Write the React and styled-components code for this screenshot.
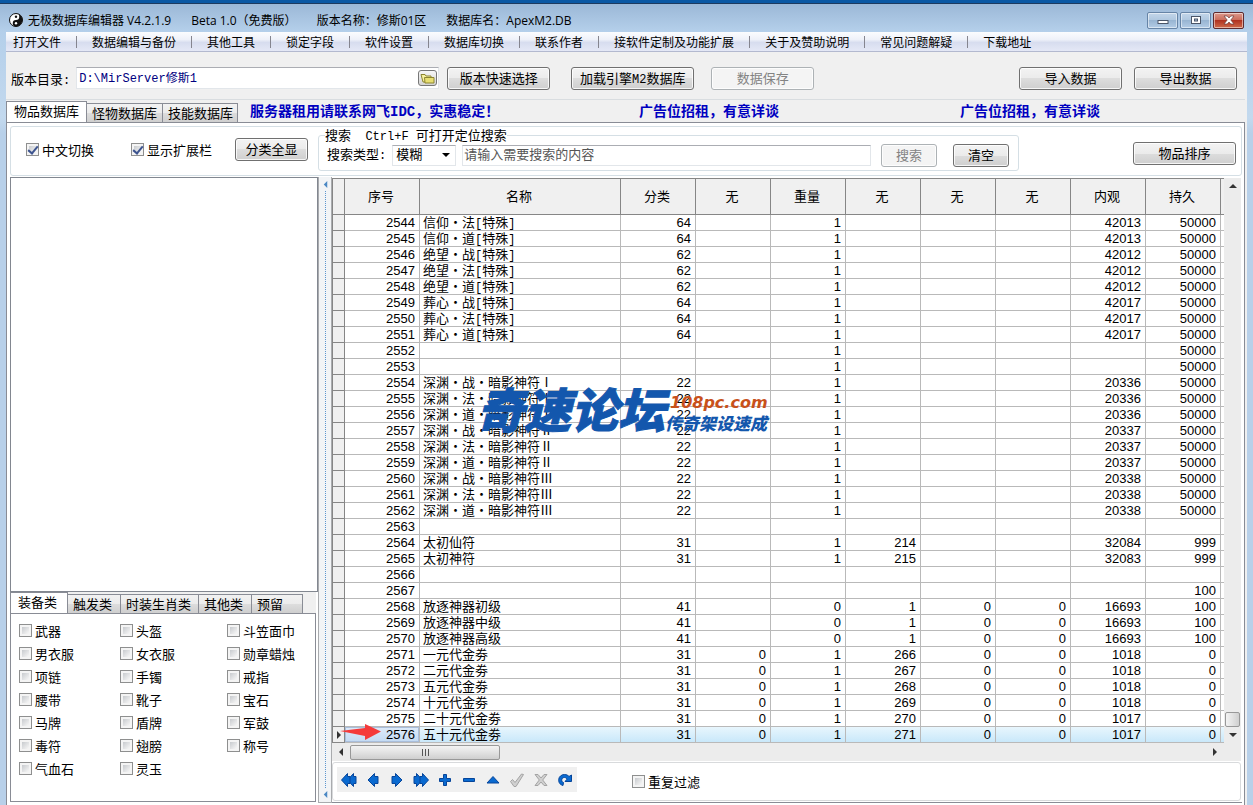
import React from 'react'
import styled, { createGlobalStyle, css } from 'styled-components'

const song = `"Liberation Mono", "Noto Sans CJK SC", monospace`
const yahei = `"Open Sans", "Noto Sans CJK SC", sans-serif`

const GlobalStyle = createGlobalStyle`
  * {
    box-sizing: border-box;
  }
  body {
    margin: 0;
    overflow: hidden;
    background: #fff;
    color: #000;
    font-family: "Noto Sans CJK SC", sans-serif;
    font-size: 13px;
    line-height: 15px;
  }
  button, input, select {
    margin: 0;
    font: inherit;
    color: inherit;
  }
`

const Window = styled.div`
  height: 100vh;
  display: flex;
  flex-direction: column;
  padding: 0 6px;
  border-top: 3px solid #0a58a4;
  background: linear-gradient(#9ab7d6, #b4cfea 28px, #c3d9ee 115px, #b8d0e9 130px);
`

const TitleBar = styled.header`
  height: 29px;
  flex: none;
  display: flex;
  align-items: center;
  gap: 20px;
  padding: 4px 9px 0;
  margin: 0 -6px;
  border-top: 1px solid #1d3a5f;
  font-family: ${yahei};
  font-size: 12px;
  white-space: nowrap;
`

const AppName = styled.span`
  display: flex;
  align-items: center;
  gap: 5px;
`

const WindowButtons = styled.div`
  display: flex;
  gap: 2px;
  margin-left: auto;
`

const WindowButton = styled.button`
  width: 31px;
  height: 17px;
  display: flex;
  align-items: center;
  justify-content: center;
  padding: 0;
  border: 1px solid ${(p) => (p.$close ? '#5f2a2e' : '#6684a6')};
  border-radius: 2px;
  box-shadow: inset 0 0 0 1px rgba(255, 255, 255, 0.5);
  background: ${(p) =>
    p.$close
      ? 'linear-gradient(#dd9a8d, #cb6d5c 45%, #b03220 50%, #cf6a4a)'
      : 'linear-gradient(#c3d6ea, #b0c8e0 45%, #98b5d2 50%, #b3cce6)'};
`

const MenuBar = styled.nav`
  height: 20px;
  flex: none;
  display: flex;
  align-items: center;
  padding-left: 7px;
  border-bottom: 1px solid #b3b9cf;
  background: linear-gradient(#fbfcfe, #eef1f9 40%, #d7ddef 55%, #e4e8f6);
  font-size: 12px;
  white-space: nowrap;
  overflow: hidden;
`

const MenuItem = styled.button`
  padding: 0;
  border: 0;
  background: none;
  line-height: 16px;
`

const MenuSeparator = styled.span`
  width: 1px;
  height: 12px;
  flex: none;
  margin: 0 15px;
  background: #85858f;
`

const Body = styled.main`
  flex: 1;
  min-height: 0;
  display: flex;
  flex-direction: column;
  padding-right: 2px;
  background: #f0f0f0;
`

const Toolbar = styled.div`
  height: 48px;
  flex: none;
  display: flex;
  align-items: center;
  padding: 5px 8px 0 5px;
  border-bottom: 1px solid #d9dde0;
  white-space: nowrap;
`

const Button = styled.button`
  width: ${(p) => p.$width || 103}px;
  height: 23px;
  flex: none;
  padding: 0 0 2px;
  border: 1px solid #707070;
  border-radius: 3px;
  box-shadow: inset 0 0 0 1px rgba(255, 255, 255, 0.8);
  background: linear-gradient(#f3f3f3, #ebebeb 50%, #dddddd 50%, #cfcfcf);
  white-space: nowrap;

  &:disabled {
    border-color: #adb2b5;
    background: #f4f4f4;
    color: #838383;
  }
`

const SortButton = styled(Button)`
  margin-top: 15px;
`

const ButtonSet = styled.div`
  display: flex;
  gap: ${(p) => p.$gap}px;
  margin-left: ${(p) => p.$left || 'auto'};
`

const PathField = styled.div`
  width: 363px;
  height: 22px;
  display: flex;
  align-items: center;
  margin: 0 8px 0 6px;
  padding-right: 1px;
  border: 1px solid #e2e6ea;
  border-top-color: #abadb3;
  background: #fff;
`

const PathInput = styled.input`
  flex: 1;
  min-width: 0;
  padding: 2px 2px 0;
  border: 0;
  outline: 0;
  background: none;
  color: #000080;
  font-family: ${song};
  font-size: 12px;
`

const FolderButton = styled.button`
  width: 19px;
  height: 16px;
  display: flex;
  align-items: center;
  justify-content: center;
  padding: 0;
  border: 1px solid #777;
  border-radius: 3px;
  background: linear-gradient(#f6f6f6, #d4d4d4);
`

const TabRow = styled.div`
  height: ${(p) => p.$height}px;
  flex: none;
  display: flex;
  align-items: flex-end;
  background: #f0f0f0;
  white-space: nowrap;
`

const Tab = styled.button`
  width: ${(p) => p.$width}px;
  flex: none;
  height: 20px;
  padding: 0 0 2px 5px;
  border: 1px solid #898c95;
  border-left-width: ${(p) => (p.$first ? 1 : 0)}px;
  background: linear-gradient(#f2f2f2, #ebebeb 50%, #dddddd 50%, #cfcfcf);
  text-align: left;

  ${(p) =>
    p.$active &&
    css`
      height: 22px;
      padding: 0 0 4px 7px;
      border-bottom-color: #fff;
      background: #fff;
    `}
`

const Ads = styled.div`
  flex: 1;
  display: grid;
  grid-template-columns: 389px 321px auto;
  align-self: center;
  padding: 2px 0 0 12px;
  color: #0000c0;
  font-family: ${song};
  font-size: 14px;
  font-weight: bold;
`

const Page = styled.section`
  flex: 1;
  min-height: 0;
  display: flex;
  flex-direction: column;
  gap: 1px;
  margin-top: -1px;
  padding: 3px 2px 2px 3px;
  border: 1px solid #898c95;
  border-bottom: 0;
  background: #fff;
`

const SearchPanel = styled.div`
  height: 50px;
  flex: none;
  display: flex;
  align-items: flex-start;
  padding: 0 5px 0 15px;
  border: 1px solid #d5dfe5;
  border-radius: 3px;
  white-space: nowrap;
`

const CheckLabel = styled.label`
  display: flex;
  align-items: center;
  gap: 3px;
  white-space: nowrap;
`

const CheckBox = styled.input.attrs({ type: 'checkbox' })`
  appearance: none;
  width: 13px;
  height: 13px;
  flex: none;
  display: flex;
  align-items: center;
  justify-content: center;
  border: 1px solid #8e8f8f;
  box-shadow: inset 0 0 0 2px #f4f4f4;
  background: linear-gradient(135deg, #b9bdc2, #f3f3f3 75%);

  &:checked::after {
    content: "";
    width: 4px;
    height: 8px;
    margin-bottom: 2px;
    border: solid #3d548f;
    border-width: 0 2px 2px 0;
    transform: rotate(40deg);
  }
`

const ViewOptions = styled.div`
  width: 292px;
  flex: none;
  display: grid;
  grid-template-columns: 105px 104px auto;
  align-items: center;
  padding-top: 11px;
`

const SearchGroup = styled.fieldset`
  flex: 0 1 701px;
  min-width: 0;
  height: 43px;
  display: flex;
  align-items: center;
  margin: 1px 0 0;
  padding: 0 9px 3px;
  border: 1px solid #d5dfe5;
  border-radius: 3px;
`

const Legend = styled.legend`
  margin-left: -3px;
  padding: 0 0 2px;
  line-height: 13px;
  white-space: pre;
`

const FieldLabel = styled.label`
  margin: 0 0 3px -1px;
`

const Ascii = styled.span`
  font-family: "Liberation Mono", monospace;
  font-size: 12px;
  line-height: 0;
`

const TypePicker = styled.div`
  width: 64px;
  height: 21px;
  flex: none;
  display: flex;
  align-items: center;
  margin: 0 6px;
  padding-right: 5px;
  border: 1px solid #e2e6ea;
  border-top-color: #abadb3;
`

const TypeSelect = styled.select`
  flex: 1;
  min-width: 0;
  appearance: none;
  padding: 0 3px 3px;
  border: 0;
  background: none;
`

const SearchInput = styled.input`
  flex: 1;
  min-width: 0;
  height: 21px;
  margin-right: 10px;
  padding: 0 1px 4px;
  border: 1px solid #e2e6ea;
  border-top-color: #abadb3;

  &::placeholder {
    color: #555;
    opacity: 1;
  }
`

const Split = styled.div`
  flex: 1;
  min-height: 0;
  display: flex;
`

const Side = styled.aside`
  width: 308px;
  flex: none;
  display: flex;
  flex-direction: column;
  padding-bottom: 1px;
`

const Tree = styled.div`
  flex: 1;
  min-height: 0;
  border: 1px solid #828790;
  background: #fff;
`

const FilterTabs = styled.div`
  height: 210px;
  flex: none;
  display: flex;
  flex-direction: column;
  padding-right: 2px;
`

const FilterPage = styled.div`
  flex: 1;
  display: grid;
  grid-template-columns: 101px 107px auto;
  grid-auto-rows: 23px;
  margin-top: -1px;
  padding: 5px 0 0 8px;
  border: 1px solid #898c95;
  background: #fff;
`

const Splitter = styled.div`
  width: 14px;
  flex: none;
  display: flex;
  flex-direction: column;
  align-items: center;
  justify-content: space-between;
  padding: 4px 0;
  border: 1px solid #a9abae;
  border-top: 0;
  background: #f2f4f6;

  &::after {
    content: "";
    order: 1;
    flex: 1;
    margin: 3px 0;
    border-left: 1px dotted #5c96cf;
  }
  svg:last-of-type {
    order: 2;
  }
`

const GridSide = styled.div`
  flex: 1;
  min-width: 0;
  display: flex;
  flex-direction: column;
  padding: 1px 1px 0 0;
  border-bottom: 1px solid #898c95;
`

const GridArea = styled.div`
  position: relative;
  flex: 1;
  min-height: 0;
  display: flex;
`

const GridView = styled.div`
  flex: 1;
  min-width: 0;
  overflow: hidden;
`

const Table = styled.table`
  width: 100%;
  table-layout: fixed;
  border-collapse: separate;
  border-spacing: 0;
`

const HeadCell = styled.th`
  height: 37px;
  padding: 0 2px 2px 0;
  border: solid #868686;
  border-width: 1px 1px 1px 0;
  background: #f0f0f0;
  font-weight: normal;
  text-align: center;

  &:first-child {
    border-left-width: 1px;
  }
  &:last-child {
    padding: 0;
    border-right-width: 0;
  }
`

const Cell = styled.td`
  height: 16px;
  padding: 0 4px 0 3px;
  border: solid #b9b9b9;
  border-width: 0 1px 1px 0;
  font-family: "Liberation Sans", sans-serif;
  font-size: 13px;
  line-height: 15px;
  text-align: right;
  white-space: nowrap;

  &:last-child {
    padding: 0;
    border-right: 0;
  }
`

const NameCell = styled(Cell)`
  padding-bottom: 2px;
  font-family: "Noto Sans CJK SC", sans-serif;
  line-height: 13px;
  text-align: left;
`

const Indicator = styled.td`
  height: 16px;
  padding: 0 0 0 2px;
  border: solid #868686;
  border-width: 0 1px 1px;
  background: #f0f0f0;
  line-height: 0;
  text-align: left;
`

const Row = styled.tr`
  ${(p) =>
    p.$selected &&
    css`
      ${Cell} {
        background: linear-gradient(#e8f6fd, #c9e8fa);
      }
      ${Cell}:nth-child(2) {
        box-shadow: inset 0 0 0 1px #a9bedb;
        background: linear-gradient(#dfebf9, #c3daf3);
      }
    `}
`

const Watermark = styled.div`
  position: absolute;
  left: 145px;
  top: 205px;
  display: flex;
  align-items: flex-end;
  color: #1357ad;
  font-style: italic;
  font-weight: 900;
  white-space: nowrap;
  pointer-events: none;
`

const WatermarkName = styled.span`
  font-size: 47px;
  line-height: 50px;
  -webkit-text-stroke: 1px #1357ad;
`

const WatermarkSide = styled.span`
  display: flex;
  flex-direction: column;
  font-size: 17px;
  line-height: 20px;
`

const WatermarkSite = styled.span`
  padding-left: 5px;
  color: #c8511b;
  font-family: "DejaVu Sans", sans-serif;
  font-size: 16px;
`

const Pointer = styled.svg`
  position: absolute;
  left: 8px;
  bottom: 3px;
`

const VScroll = styled.div`
  width: 17px;
  flex: none;
  display: flex;
  flex-direction: column;
  align-items: center;
  background: #ececec;
`

const HScroll = styled.div`
  height: 18px;
  flex: none;
  display: flex;
  align-items: center;
  padding-right: 17px;
  background: #ececec;
`

const ScrollButton = styled.button`
  width: 18px;
  height: 16px;
  flex: none;
  display: flex;
  align-items: center;
  justify-content: center;
  padding: 0;
  border: 0;
  background: none;
`

const Thumb = styled.div`
  width: ${(p) => p.$width}px;
  height: 15px;
  display: flex;
  align-items: center;
  justify-content: center;
  border: 1px solid #989898;
  border-radius: 2px;
  background: linear-gradient(${(p) => (p.$vertical ? '90deg, ' : '')}#f3f3f3, #e2e2e2 50%, #cfcfcf);
`

const Spacer = styled.div`
  flex: 1;
`

const Footer = styled.div`
  height: 39px;
  flex: none;
  display: flex;
  align-items: center;
  gap: 55px;
  margin: 1px 0;
  padding: 0 4px;
  border: 1px solid #d8dadc;
  border-radius: 3px;
`

const Navigator = styled.div`
  display: flex;
  margin-bottom: 4px;
  background: #f0f0f0;
`

const NavButton = styled.button`
  width: 24px;
  height: 25px;
  display: flex;
  align-items: center;
  justify-content: center;
  padding: 0;
  border: 0;
  background: none;
`

const menus = [
  '打开文件', '数据编辑与备份', '其他工具', '锁定字段', '软件设置', '数据库切换',
  '联系作者', '接软件定制及功能扩展', '关于及赞助说明', '常见问题解疑', '下载地址',
]

const mainTabs = [['物品数据库', 81], ['怪物数据库', 76], ['技能数据库', 75]]
const filterTabs = [['装备类', 58], ['触发类', 53], ['时装生肖类', 78], ['其他类', 53], ['预留', 51]]

const filters = [
  '武器', '头盔', '斗笠面巾',
  '男衣服', '女衣服', '勋章蜡烛',
  '项链', '手镯', '戒指',
  '腰带', '靴子', '宝石',
  '马牌', '盾牌', '军鼓',
  '毒符', '翅膀', '称号',
  '气血石', '灵玉',
]

const columns = ['序号', '名称', '分类', '无', '重量', '无', '无', '无', '内观', '持久']

const rows = [
  [2544, '信仰·法[特殊]', 64, '', 1, '', '', '', 42013, 50000],
  [2545, '信仰·道[特殊]', 64, '', 1, '', '', '', 42013, 50000],
  [2546, '绝望·战[特殊]', 62, '', 1, '', '', '', 42012, 50000],
  [2547, '绝望·法[特殊]', 62, '', 1, '', '', '', 42012, 50000],
  [2548, '绝望·道[特殊]', 62, '', 1, '', '', '', 42012, 50000],
  [2549, '葬心·战[特殊]', 64, '', 1, '', '', '', 42017, 50000],
  [2550, '葬心·法[特殊]', 64, '', 1, '', '', '', 42017, 50000],
  [2551, '葬心·道[特殊]', 64, '', 1, '', '', '', 42017, 50000],
  [2552, '', '', '', 1, '', '', '', '', 50000],
  [2553, '', '', '', 1, '', '', '', '', 50000],
  [2554, '深渊·战·暗影神符Ⅰ', 22, '', 1, '', '', '', 20336, 50000],
  [2555, '深渊·法·暗影神符Ⅰ', 22, '', 1, '', '', '', 20336, 50000],
  [2556, '深渊·道·暗影神符Ⅰ', 22, '', 1, '', '', '', 20336, 50000],
  [2557, '深渊·战·暗影神符Ⅱ', 22, '', 1, '', '', '', 20337, 50000],
  [2558, '深渊·法·暗影神符Ⅱ', 22, '', 1, '', '', '', 20337, 50000],
  [2559, '深渊·道·暗影神符Ⅱ', 22, '', 1, '', '', '', 20337, 50000],
  [2560, '深渊·战·暗影神符Ⅲ', 22, '', 1, '', '', '', 20338, 50000],
  [2561, '深渊·法·暗影神符Ⅲ', 22, '', 1, '', '', '', 20338, 50000],
  [2562, '深渊·道·暗影神符Ⅲ', 22, '', 1, '', '', '', 20338, 50000],
  [2563, '', '', '', '', '', '', '', '', ''],
  [2564, '太初仙符', 31, '', 1, 214, '', '', 32084, 999],
  [2565, '太初神符', 31, '', 1, 215, '', '', 32083, 999],
  [2566, '', '', '', '', '', '', '', '', ''],
  [2567, '', '', '', '', '', '', '', '', 100],
  [2568, '放逐神器初级', 41, '', 0, 1, 0, 0, 16693, 100],
  [2569, '放逐神器中级', 41, '', 0, 1, 0, 0, 16693, 100],
  [2570, '放逐神器高级', 41, '', 0, 1, 0, 0, 16693, 100],
  [2571, '一元代金劵', 31, 0, 1, 266, 0, 0, 1018, 0],
  [2572, '二元代金劵', 31, 0, 1, 267, 0, 0, 1018, 0],
  [2573, '五元代金劵', 31, 0, 1, 268, 0, 0, 1018, 0],
  [2574, '十元代金劵', 31, 0, 1, 269, 0, 0, 1018, 0],
  [2575, '二十元代金劵', 31, 0, 1, 270, 0, 0, 1017, 0],
  [2576, '五十元代金劵', 31, 0, 1, 271, 0, 0, 1017, 0],
]

const selectedId = 2576

const doubleArrow = 'M6.500 1.500v3H9v7H6.500v3L0.500 8z'

// record navigator, drawn on a 16x16 grid
const navIcons = [
  ['首条', doubleArrow],
  ['上一条', 'M9.500 1.500v3H13v7H9.500v3L3 8z'],
  ['下一条', 'M6.500 1.500v3H3v7h3.500v3L13 8z'],
  ['末条', doubleArrow],
  ['添加', 'M6.500 2.500h3v4h4v3h-4v4h-3v-4h-4v-3h4z'],
  ['删除', 'M2.500 6.500h11v3h-11z'],
  ['编辑', 'M8 4.500l6 6.500H2z'],
  ['保存', 'M1.500 9.500l2-2 2.500 3 6.500-8.500 2 .5L7 14.500H5z', true],
  ['取消', 'M2 2.500h3l3 3.500 3-3.500h3L9.700 8l4.300 5.500h-3L8 10l-3 3.500H2L6.300 8z', true],
  ['刷新', 'M6 13.500C2.500 12.500 1.500 10 1.700 7.500 2 4.500 4.500 2.500 7.500 2.500c2 0 3.500.8 4.500 2l2.500-1.500v6.500H8L10 7.200C9.300 6 8.500 5.500 7.500 5.500 5.800 5.500 4.700 6.500 4.700 8c0 1.200.5 2 1.800 2.500z'],
]

function NavIcon({ name, d, off }) {
  return (
    <svg
      width="16"
      height="16"
      viewBox="0 0 16 16"
      fill={off ? '#d0d0d0' : '#0a6ad0'}
      stroke={off ? '#a4a4a4' : '#06459a'}
    >
      <g transform={name === '末条' ? 'matrix(-1 0 0 1 16 0)' : undefined}>
        {d === doubleArrow && <path d={d} transform="translate(6 0)" />}
        <path d={d} />
      </g>
    </svg>
  )
}

const arrows = {
  up: 'M0 6l4-4 4 4z',
  down: 'M0 2l4 4 4-4z',
  left: 'M6 0L2 4l4 4z',
  right: 'M2 0l4 4-4 4z',
}

function Arrow({ dir, size = 8, color = '#333' }) {
  return (
    <svg width={size} height={size} viewBox="0 0 8 8" fill={color}>
      <path d={arrows[dir]} />
    </svg>
  )
}

// latin runs use the narrow half-width face, the rest stays full width
function Mixed({ text }) {
  return text
    .split(/([\x20-\x7e]+)/)
    .map((part, i) => (i % 2 ? <Ascii key={i}>{part}</Ascii> : part))
}

function TitleArea() {
  return (
    <TitleBar>
      <AppName>
        <svg width="14" height="14" viewBox="0 0 14 14">
          <circle cx="7" cy="7" r="6.500" fill="#fff" stroke="#111" />
          <path d="M7 .5a6.500 6.500 0 0 0 0 13 3.250 3.250 0 0 0 0-6.500 3.250 3.250 0 0 1 0-6.500z" fill="#111" transform="matrix(-1 0 0 1 14 0)" />
          <circle cx="7" cy="3.800" r="1.200" fill="#111" />
          <circle cx="7" cy="10.200" r="1.200" fill="#fff" />
        </svg>
        无极数据库编辑器 V4.2.1.9
      </AppName>
      <span>Beta 1.0（免费版）</span>
      <span>版本名称：修斯01区</span>
      <span>数据库名：ApexM2.DB</span>
      <WindowButtons>
        <WindowButton aria-label="最小化">
          <svg width="12" height="10" viewBox="0 0 12 10">
            <rect x="1" y="5.500" width="10" height="3" fill="#fff" stroke="#4a5568" />
          </svg>
        </WindowButton>
        <WindowButton aria-label="最大化">
          <svg width="12" height="10" viewBox="0 0 12 10">
            <rect x="1.500" y="1.500" width="9" height="7" fill="#fff" stroke="#4a5568" />
            <rect x="4.500" y="4" width="3" height="2" fill="#b0c8e0" stroke="#4a5568" />
          </svg>
        </WindowButton>
        <WindowButton $close aria-label="关闭">
          <svg width="12" height="10" viewBox="0 0 12 10">
            <path d="M1 1h3.200L6 3 7.800 1H11L7.800 5 11 9H7.800L6 7 4.200 9H1l3.200-4z" fill="#fff" stroke="#6b3a3a" strokeWidth=".7" />
          </svg>
        </WindowButton>
      </WindowButtons>
    </TitleBar>
  )
}

function SearchArea() {
  return (
    <SearchPanel>
      <ViewOptions>
        <CheckLabel><CheckBox defaultChecked />中文切换</CheckLabel>
        <CheckLabel><CheckBox defaultChecked />显示扩展栏</CheckLabel>
        <Button $width={73}>分类全显</Button>
      </ViewOptions>
      <SearchGroup>
        <Legend><Mixed text="搜索  Ctrl+F 可打开定位搜索" /></Legend>
        <FieldLabel htmlFor="type"><Mixed text="搜索类型:" /></FieldLabel>
        <TypePicker>
          <TypeSelect id="type"><option>模糊</option></TypeSelect>
          <Arrow dir="down" color="#000" />
        </TypePicker>
        <SearchInput aria-label="搜索内容" placeholder="请输入需要搜索的内容" />
        <ButtonSet $gap={16}>
          <Button $width={56} disabled>搜索</Button>
          <Button $width={56}>清空</Button>
        </ButtonSet>
      </SearchGroup>
      <ButtonSet>
        <SortButton>物品排序</SortButton>
      </ButtonSet>
    </SearchPanel>
  )
}

function DataGrid() {
  return (
    <GridArea>
      <GridView>
        <Table>
          <colgroup>
            <col width="13" />
            <col width="75" />
            <col />
            {columns.slice(2).map((c, i) => <col key={i} width="75" />)}
            <col width="3" />
          </colgroup>
          <thead>
            <tr>
              <HeadCell />
              {columns.map((c, i) => <HeadCell key={i}>{c}</HeadCell>)}
              <HeadCell />
            </tr>
          </thead>
          <tbody>
            {rows.map(([id, name, ...values]) => (
              <Row key={id} $selected={id === selectedId}>
                <Indicator>{id === selectedId && <Arrow dir="right" />}</Indicator>
                <Cell>{id}</Cell>
                <NameCell><Mixed text={name} /></NameCell>
                {values.map((value, i) => <Cell key={i}>{value}</Cell>)}
                <Cell />
              </Row>
            ))}
          </tbody>
        </Table>
      </GridView>
      <VScroll>
        <ScrollButton aria-label="向上"><Arrow dir="up" /></ScrollButton>
        <Spacer />
        <Thumb $width={15} $vertical />
        <ScrollButton aria-label="向下"><Arrow dir="down" /></ScrollButton>
      </VScroll>
      <Watermark>
        <WatermarkName>奇速论坛</WatermarkName>
        <WatermarkSide>
          <WatermarkSite>108pc.com</WatermarkSite>
          传奇架设速成
        </WatermarkSide>
      </Watermark>
      <Pointer width="42" height="16" viewBox="0 0 42 16">
        <path d="M0 7l25-3V0l16 7.500L25 16v-4z" fill="#f53a3a" />
      </Pointer>
    </GridArea>
  )
}

export default function App() {
  return (
    <Window>
      <GlobalStyle />
      <TitleArea />
      <MenuBar>
        {menus.map((name, i) => (
          <React.Fragment key={name}>
            {i > 0 && <MenuSeparator />}
            <MenuItem>{name}</MenuItem>
          </React.Fragment>
        ))}
      </MenuBar>
      <Body>
        <Toolbar>
          <label htmlFor="path"><Mixed text="版本目录:" /></label>
          <PathField>
            <PathInput id="path" defaultValue="D:\MirServer修斯1" />
            <FolderButton aria-label="浏览">
              <svg width="15" height="12" viewBox="0 0 15 12">
                <path d="M1 2.500h4l1 1.500h5v6H3z" fill="#f7f2a0" stroke="#8c8530" />
                <path d="M4.500 5.500H14V11H5z" fill="#e8df72" stroke="#8c8530" />
              </svg>
            </FolderButton>
          </PathField>
          <Button>版本快速选择</Button>
          <ButtonSet $gap={17} $left="21px">
            <Button $width={123}>加载引擎<Ascii>M2</Ascii>数据库</Button>
            <Button disabled>数据保存</Button>
          </ButtonSet>
          <ButtonSet $gap={12}>
            <Button>导入数据</Button>
            <Button>导出数据</Button>
          </ButtonSet>
        </Toolbar>
        <TabRow $height={23}>
          {mainTabs.map(([name, width], i) => (
            <Tab key={name} $width={width} $first={i === 0} $active={i === 0}>{name}</Tab>
          ))}
          <Ads>
            <span>服务器租用请联系网飞IDC，实惠稳定！</span>
            <span>广告位招租，有意详谈</span>
            <span>广告位招租，有意详谈</span>
          </Ads>
        </TabRow>
        <Page>
          <SearchArea />
          <Split>
            <Side>
              <Tree />
              <FilterTabs>
                <TabRow $height={22}>
                  {filterTabs.map(([name, width], i) => (
                    <Tab key={name} $width={width} $first={i === 0} $active={i === 0}>{name}</Tab>
                  ))}
                </TabRow>
                <FilterPage>
                  {filters.map((name) => (
                    <CheckLabel key={name}><CheckBox />{name}</CheckLabel>
                  ))}
                </FilterPage>
              </FilterTabs>
            </Side>
            <Splitter>
              <Arrow dir="left" size={7} color="#4b88c4" />
              <Arrow dir="left" size={7} color="#4b88c4" />
            </Splitter>
            <GridSide>
              <DataGrid />
              <HScroll>
                <ScrollButton aria-label="向左"><Arrow dir="left" /></ScrollButton>
                <Thumb $width={150}>
                  <svg width="9" height="7" viewBox="0 0 9 7" stroke="#555">
                    <path d="M1.500 0v7M4.500 0v7M7.500 0v7" />
                  </svg>
                </Thumb>
                <Spacer />
                <ScrollButton aria-label="向右"><Arrow dir="right" /></ScrollButton>
              </HScroll>
              <Footer>
                <Navigator>
                  {navIcons.map(([name, d, off]) => (
                    <NavButton key={name} aria-label={name} disabled={off}>
                      <NavIcon name={name} d={d} off={off} />
                    </NavButton>
                  ))}
                </Navigator>
                <CheckLabel><CheckBox />重复过滤</CheckLabel>
              </Footer>
            </GridSide>
          </Split>
        </Page>
      </Body>
    </Window>
  )
}
